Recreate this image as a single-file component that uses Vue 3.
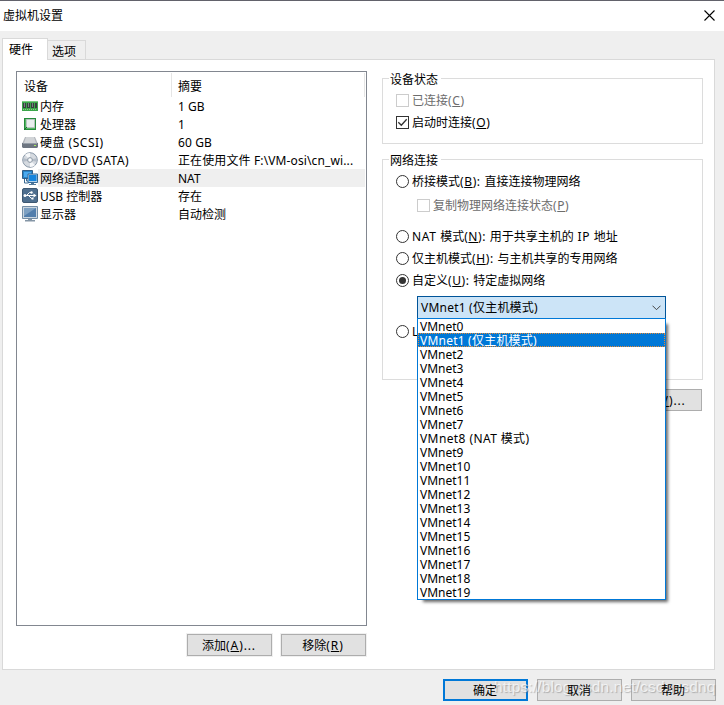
<script setup>
const devices = [
  { icon: 'memory', name: '内存', summary: '1 GB' },
  { icon: 'cpu', name: '处理器', summary: '1' },
  { icon: 'disk', name: '硬盘 (SCSI)', summary: '60 GB', spread: true },
  { icon: 'cd', name: 'CD/DVD (SATA)', summary: '正在使用文件 F:\\VM-osi\\cn_wi...', spread: true },
  { icon: 'net', name: '网络适配器', summary: 'NAT', selected: true },
  { icon: 'usb', name: 'USB 控制器', summary: '存在' },
  { icon: 'display', name: '显示器', summary: '自动检测' },
]
const names = { 1: 'VMnet1 (仅主机模式)', 8: 'VMnet8 (NAT 模式)' }
const networks = Array.from({ length: 20 }, (_, i) => names[i] || 'VMnet' + i)
</script>

<template>
  <div class="window">
    <header class="titlebar">
      <span>虚拟机设置</span>
      <svg class="close" width="11" height="11" viewBox="0 0 11 11"><path d="M.5.5l10 10M10.500.5l-10 10" stroke="#000" stroke-width="1.100" fill="none" /></svg>
    </header>
    <nav class="tabs">
      <div class="tab active">硬件</div>
      <div class="tab">选项</div>
    </nav>
    <main class="panel">
      <section class="left">
        <div class="list">
          <div class="row head"><span class="col-name">设备</span><span class="col-sum">摘要</span></div>
          <div v-for="d in devices" :key="d.icon" class="row" :class="{ selected: d.selected, spread: d.spread }">
            <svg class="icon" width="16" height="18" viewBox="0 0 16 18">
              <g v-if="d.icon === 'memory'">
                <path d="M0 4h16v10H0z" fill="#3ba54a" /><path d="M0 4h16v1H0z" fill="#79cc80" />
                <path d="M1 6h3v5H1zM5 6h3v5H5zM9 6h3v5H9zM13 6h2v5h-2z" fill="#35413c" />
                <path d="M2 6h1v4H2zM6 6h1v4H6zM10 6h1v4h-1z" fill="#777f83" />
                <path d="M1 12.500h14" stroke="#8ccf83" stroke-dasharray="1 1" />
              </g>
              <g v-else-if="d.icon === 'cpu'">
                <path d="M2 3h12v12H2z" fill="#258b3b" /><path d="M3 4h10v10H3z" fill="#54b863" />
                <path d="M4.500 4.500h8v8h-8z" fill="#e9eeee" stroke="#b5c5bd" /><path d="M2 15l3-3" stroke="#176c2c" />
              </g>
              <g v-else-if="d.icon === 'disk'">
                <path d="M3 4h10l3 7H0z" fill="#b0b4ba" /><path d="M4 4h8l2 6H2z" fill="#d1d4d7" />
                <path d="M0 10h16v4l-1 1H1l-1-1z" fill="#6d7580" /><path d="M1 10.500h14" stroke="#959da7" />
                <path d="M12 12h2v1h-2z" fill="#a8f05c" />
              </g>
              <g v-else-if="d.icon === 'cd'">
                <circle cx="8" cy="9" r="7.300" fill="#d5dae0" stroke="#8998a8" />
                <path d="M8 9L3 3.800A7 7 0 0 1 8 2zM8 9l5 5.200A7 7 0 0 1 8 16z" fill="#f6f8fa" />
                <path d="M8 9l7-2v4zM8 9l-7 2V7z" fill="#b4bdc8" />
                <circle cx="8" cy="9" r="2.400" fill="#edf1f5" stroke="#8e99a5" /><circle cx="8" cy="9" r="1" fill="#fff" />
              </g>
              <g v-else-if="d.icon === 'net'">
                <path d="M.5 1.500h10v8H.5z" fill="#2784c7" stroke="#315e88" /><path d="M2 3h7v5H2z" fill="#4aaaf0" />
                <path d="M2.500 10v4h4M4.500 10v2h2" fill="none" stroke="#386891" />
                <path d="M6 5h9.500v8.500H6z" fill="#b5d3ea" stroke="#376b98" /><path d="M7 6h7.500v6H7z" fill="#1685dd" />
                <path d="M9 14h3v1h2v1H7v-1h2z" fill="#51789a" />
              </g>
              <g v-else-if="d.icon === 'usb'">
                <rect x=".5" y="1.500" width="15" height="14" rx="1.500" fill="#4f6f8f" stroke="#3e5872" />
                <path d="M2 8.500h10M4.500 8.500l3-3h2M6.500 8.500l3 3h1.500" fill="none" stroke="#fff" />
                <circle cx="3" cy="8.500" r="1.500" fill="#fff" /><circle cx="9.500" cy="5.500" r="1.200" fill="#fff" />
                <path d="M11.500 6.500l3 2-3 2zM9.500 10.500h2v2h-2z" fill="#fff" />
              </g>
              <g v-else>
                <path d="M.5 1.500h15v12H.5z" fill="#cbd6e0" stroke="#748da5" /><path d="M2 3h12v9H2z" fill="#527eac" />
                <path d="M2 3h12L2 11z" fill="#7da0c2" /><path d="M6 14h4v1h3v1.500H3V15h3z" fill="#8596a6" />
              </g>
            </svg>
            <div class="cells"><span class="col-name">{{ d.name }}</span><span class="col-sum">{{ d.summary }}</span></div>
          </div>
        </div>
        <div class="actions">
          <button class="btn">添加<b>(<u>A</u>)...</b></button>
          <button class="btn">移除<b>(<u>R</u>)</b></button>
        </div>
      </section>
      <section class="right">
        <div class="group status">
          <div class="legend">设备状态</div>
          <label class="opt disabled"><i class="box" /><span>已连接<b>(<u>C</u>)</b></span></label>
          <label class="opt"><i class="box"><svg width="11" height="11" viewBox="0 0 11 11"><path d="M1.300 5.300l3 3 5.400-6" fill="none" stroke="#333" stroke-width="1.300" /></svg></i><span>启动时连接<b>(<u>O</u>)</b></span></label>
        </div>
        <div class="group network">
          <div class="legend">网络连接</div>
          <label class="opt"><i class="radio" /><span>桥接模式<b>(<u>B</u>): </b>直接连接物理网络</span></label>
          <label class="opt disabled sub"><i class="box" /><span>复制物理网络连接状态<b>(<u>P</u>)</b></span></label>
          <label class="opt nat"><i class="radio" /><span><b>NAT </b>模式<b>(<u>N</u>): </b>用于共享主机的<b> IP </b>地址</span></label>
          <label class="opt"><i class="radio" /><span>仅主机模式<b>(<u>H</u>): </b>与主机共享的专用网络</span></label>
          <label class="opt"><i class="radio on" /><span>自定义<b>(<u>U</u>): </b>特定虚拟网络</span></label>
          <div class="combo">
            <span>VMnet1 (仅主机模式)</span>
            <svg width="9" height="6" viewBox="0 0 9 6"><path d="M.5.7l4 4 4-4" fill="none" stroke="#444" /></svg>
            <div class="menu">
              <div v-for="(n, i) in networks" :key="n" class="item" :class="{ current: i === 1 }">{{ n }}</div>
            </div>
          </div>
          <label class="opt lan"><i class="radio" /><span>LAN 区段(<u>L</u>):</span></label>
        </div>
        <button class="btn advanced">高级<b>(<u>V</u>)...</b></button>
      </section>
    </main>
    <footer class="footer">
      <button class="btn primary"><span>确定</span></button>
      <button class="btn"><span>取消</span></button>
      <button class="btn"><span>帮助</span></button>
      <div class="mark">https://blog.csdn.net/csdncsdnq</div>
    </footer>
  </div>
</template>

<style>
body { margin: 0; overflow: hidden; }
</style>
<style scoped>
.window, .window * { box-sizing: border-box; }
.window { width: 724px; height: 705px; background: #efefef; border-top: 1px solid #62626b; font: 12px/18px "Noto Sans", "Noto Sans CJK SC", sans-serif; color: #000; display: flex; flex-direction: column; white-space: nowrap; }
b { font-weight: normal; letter-spacing: .6px; white-space: pre; }
.titlebar { height: 30px; background: #fff; display: flex; justify-content: space-between; padding: 6px 9px 0 3px; }
.close { margin-top: 3px; }
.tabs { height: 28px; padding: 7px 0 0 2px; display: flex; align-items: flex-end; }
.tab { width: 38px; height: 19px; border: 1px solid #d9d9d9; border-left: 0; border-bottom: 0; padding-left: 4px; line-height: 21px; }
.tab.active { width: 46px; height: 22px; border-left: 1px solid #d9d9d9; background: #fff; padding-left: 6px; margin-bottom: -1px; position: relative; z-index: 1; }
.panel { margin-left: 2px; width: 713px; height: 611px; border: 1px solid #d9d9d9; background: #fff; display: flex; padding: 11px 11px 0 13px; }
.left { width: 351px; }
.list { height: 555px; border: 1px solid #828790; padding: 1px 1px 0 5px; }
.row { height: 18px; display: flex; }
.row.head { height: 24px; line-height: 28px; border-right: 1px solid #e5e5e5; }
.head .col-name { width: 150px; border-right: 1px solid #e5e5e5; padding-left: 2px; }
.head .col-sum { padding-left: 6px; }
.icon { flex: none; }
.cells { flex: 1; display: flex; padding-left: 2px; line-height: 20px; }
.cells .col-name { width: 138px; }
.spread .col-name { letter-spacing: .5px; }
.spread .col-sum { letter-spacing: .12px; }
.selected .cells { background: #efefef; }
.actions { display: flex; justify-content: flex-end; gap: 9px; padding: 8px 1px 0 0; }
.btn { width: 85px; height: 22px; padding: 0 1px 0 0; margin: 0; border: 1px solid #adadad; background: #e1e1e1; font: inherit; color: inherit; line-height: 22px; text-align: center; }
.left .btn { box-shadow: 0 0 0 1px #f0f0f0; }
.btn b { letter-spacing: .9px; }
u { text-underline-offset: 1px; text-decoration-thickness: 1px; }
.right { margin-left: 15px; padding-top: 7px; width: 321px; display: flex; flex-direction: column; }
.group { border: 1px solid #dcdcdc; padding: 0 13px; display: flex; flex-direction: column; }
.status { height: 66px; }
.network { height: 221px; margin-top: 15px; }
.legend { align-self: flex-start; margin: -8px 0 0 -7px; padding: 0 3px 0 1px; height: 18px; background: #fff; }
.opt { height: 22px; display: flex; align-items: center; line-height: 22px; }
.opt > span { padding-top: 2px; }
.status .legend { margin-bottom: 1px; }
.status .opt > span { margin-top: -2px; }
.status .box { position: relative; top: -1px; }
.disabled { color: #6d6d6d; }
.box, .radio { width: 13px; height: 13px; border: 1px solid #333; background: #fff; margin-right: 3px; flex: none; display: block; }
.box svg { display: block; }
.disabled .box { border-color: #ccc; }
.radio { border-radius: 50%; display: flex; align-items: center; justify-content: center; }
.radio.on::after { content: ""; width: 7px; height: 7px; border-radius: 50%; background: #333; }
.sub { margin: 2px 0 0 21px; }
.nat { margin-top: 9px; }
.combo { position: relative; margin: 5px 0 0 21px; width: 249px; height: 23px; border: 1px solid #005499; background: #cce4f7; display: flex; align-items: center; justify-content: space-between; padding: 0 4px 0 3px; flex: none; letter-spacing: .22px; }
.menu { position: absolute; z-index: 2; left: -1px; top: 21px; width: 249px; height: 282px; border: 1px solid #0078d7; background: #fff; box-shadow: 4px 4px 3px -2px rgba(0,0,0,.6); }
.item { height: 14px; line-height: 15px; padding-left: 2px; }
.item:not(.current) { letter-spacing: 0; }
.item:nth-child(9) { letter-spacing: .4px; }
.item.current { background: #0078d7; color: #fff; outline: 1px dotted #e58a35; outline-offset: -1px; }
.lan { margin-top: 1px; }
.advanced { align-self: flex-end; margin: 9px 1px 0 0; }
.footer { position: relative; display: flex; justify-content: flex-end; gap: 9px; padding: 9px 8px 0 0; }
.footer .btn span { position: relative; z-index: 2; }
.btn.primary { border: 2px solid #0078d7; line-height: 20px; }
.mark { position: absolute; z-index: 1; left: 494px; top: 7px; font: 15.500px/20px "Liberation Sans", Arial, sans-serif; letter-spacing: .14px; color: rgba(255,255,255,.7); text-shadow: 1px 1px 1px rgba(110,110,110,.45); }
</style>
